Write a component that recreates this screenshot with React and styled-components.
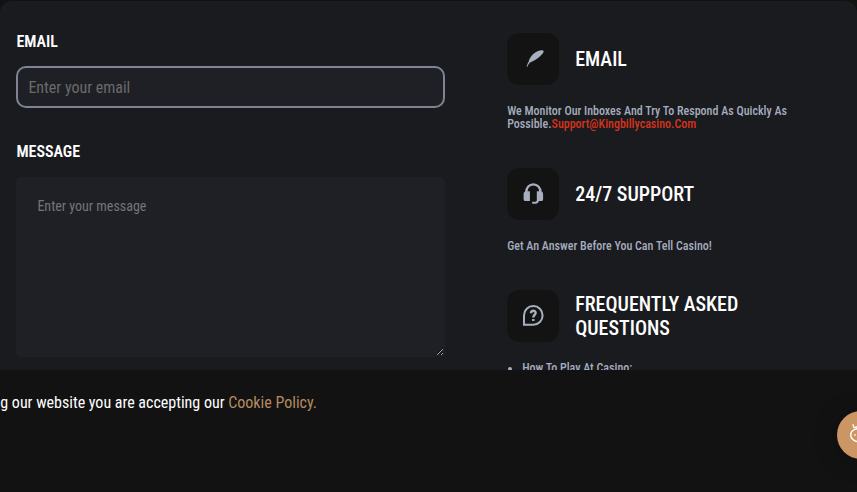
import React from "react";
import styled, { createGlobalStyle } from "styled-components";

const Global = createGlobalStyle`
  *, *::before, *::after { box-sizing: border-box; }
  html, body { margin: 0; height: 100%; overflow: hidden; background: #121213; }
  body {
    font-family: "Roboto Condensed", Roboto, sans-serif;
    font-stretch: 75%;
    color: #fff;
  }
  input, textarea, button { font-family: inherit; font-stretch: inherit; }
`;

const Page = styled.main`
  height: 492px;
  padding-top: 1px;
  overflow: hidden;
`;

const Panel = styled.section`
  display: grid;
  grid-template-columns: 429px 300px;
  column-gap: 62px;
  height: 520px;
  padding: 32px 16px 0;
  border-radius: 12px;
  background: #1a1b1f;
`;

const Form = styled.form`
  display: flex;
  flex-direction: column;
  padding-top: 1px;
`;

const Label = styled.label`
  height: 16px;
  margin-bottom: 16px;
  padding-left: 0.4px;
  font-size: 16px;
  line-height: 16px;
  font-weight: 600;
  text-transform: uppercase;
`;

const Input = styled.input`
  width: 429px;
  height: 42px;
  margin-bottom: 36px;
  padding: 0 10.4px;
  border: 2px solid #7e8494;
  border-radius: 10px;
  outline: none;
  background: #1f2025;
  color: #fff;
  font-size: 16px;
  &::placeholder { color: #6a6a6c; opacity: 1; }
`;

const Message = styled.textarea`
  width: 429px;
  height: 180px;
  padding: 20px 21.4px;
  margin-top: 1px;
  border: 0 solid transparent;
  border-width: 0 1px 1px 0;
  border-radius: 5px;
  outline: none;
  background: #1f2025;
  color: #fff;
  font-size: 14px;
  line-height: 18px;
  &::placeholder { color: #757575; opacity: 1; }
`;

const Contacts = styled.aside`
  display: flex;
  flex-direction: column;
`;

const Contact = styled.article`
  margin-bottom: ${(p) => p.$gap || 0}px;
`;

const Heading = styled.header`
  display: flex;
  align-items: center;
  gap: 16.2px;
  height: 52px;
  margin-bottom: 20px;
`;

const IconBox = styled.div`
  display: flex;
  align-items: center;
  justify-content: center;
  flex: none;
  width: 52px;
  height: 52px;
  border-radius: 12px;
  background: #131313;
  color: #a8afbf;
`;

const Title = styled.h3`
  width: 190px;
  margin: 0;
  font-size: 20px;
  line-height: 24px;
  font-weight: 550;
  text-transform: uppercase;
`;

const Note = styled.p`
  margin: 0;
  padding-left: 0.2px;
  color: #a5adbe;
  font-size: 12px;
  line-height: 13px;
  font-weight: 500;
`;

const MailLink = styled.a`
  color: #d6331b;
`;

const Topics = styled.ul`
  margin: 0;
  padding-left: 15.2px;
  color: #a5adbe;
  font-size: 12px;
  line-height: 13px;
  font-weight: 500;
`;

const CookieBar = styled.footer`
  position: fixed;
  inset: auto 0 0 0;
  height: 122px;
  padding-top: 23px;
  background: #121213;
`;

const CookieText = styled.p`
  display: flex;
  justify-content: flex-end;
  width: 317px;
  margin: 0;
  font-size: 16px;
  line-height: 20px;
  white-space: pre;
`;

const PolicyLink = styled.a`
  color: #b58a5f;
`;

const ChatButton = styled.button`
  position: fixed;
  top: 411px;
  left: 837px;
  width: 48px;
  height: 48px;
  padding: 0;
  border: 0;
  border-radius: 50%;
  background: #cb9663;
  color: #fff;
  box-shadow: 0 2px 24px rgba(0, 0, 0, 0.25);
  svg { display: block; margin: 12px; }
`;

const Feather = () => (
  <svg width="24" height="24" viewBox="0 0 24 24" fill="currentColor">
    <path d="M5.600 20C6.100 18 6.700 16.300 7.700 14.600C8.200 11.500 10.300 8.500 13.200 6.200C16 4.100 19.500 2.900 22 3.400C23.200 4 22.500 5.500 21.200 7C18.600 10.200 15.300 12.800 11.200 14.600L9 15.400C7.800 16.600 6.900 18.200 6.200 20Z" />
  </svg>
);

const Headset = () => (
  <svg width="24" height="24" viewBox="0 0 24 24" fill="currentColor">
    <path d="M5.300 11V10C5.300 5.500 8.200 2.300 12.300 2.300S19.500 5.500 19.500 10V11" fill="none" stroke="currentColor" strokeWidth="2.300" />
    <path d="M8.900 9.200V19H4.400C3.300 19 2.600 18.300 2.600 17.200V12C2.600 10.300 3.600 9.400 5.300 9.200Z" />
    <path d="M15.800 9.200V19H20.300C21.400 19 22.100 18.300 22.100 17.200V12C22.100 10.300 21.100 9.400 19.400 9.200Z" />
    <path d="M17 18C17 20 16.200 20.700 14.300 20.700H11.200" fill="none" stroke="currentColor" strokeWidth="2" />
  </svg>
);

const Question = () => (
  <svg width="24" height="24" viewBox="0 0 24 24" fill="none" stroke="currentColor" strokeWidth="2">
    <path d="M3 20.700V11.400A9.300 9.300 0 1 1 12.300 20.700Z" />
    <path d="M10 9.200C10.100 6 14.800 6 14.600 9C14.500 10.900 12.300 10.900 12.300 13.500M12.300 14.900V17.100" strokeWidth="2.500" />
  </svg>
);

const Mascot = () => (
  <svg width="24" height="24" viewBox="0 0 24 24" fill="none" stroke="currentColor" strokeWidth="1.4">
    <path d="M5.500 5.600L3.800 1.300M6 4.500L8.500 3.700" />
    <path d="M12 5.300C6 5.200 1.800 7.800 1.700 11.800C1.700 15.500 4.800 18.200 10 19" />
    <circle cx="6" cy="12" r=".5" strokeWidth="1" />
  </svg>
);

export default function App() {
  return (
    <>
      <Global />
      <Page>
        <Panel>
          <Form>
            <Label htmlFor="email">Email</Label>
            <Input id="email" type="email" placeholder="Enter your email" />
            <Label htmlFor="message">Message</Label>
            <Message id="message" placeholder="Enter your message" />
          </Form>
          <Contacts>
            <Contact $gap={37}>
              <Heading>
                <IconBox><Feather /></IconBox>
                <Title>Email</Title>
              </Heading>
              <Note>
                We Monitor Our Inboxes And Try To Respond As Quickly As
                Possible.<MailLink>Support@Kingbillycasino.Com</MailLink>
              </Note>
            </Contact>
            <Contact $gap={37}>
              <Heading>
                <IconBox><Headset /></IconBox>
                <Title>24/7 Support</Title>
              </Heading>
              <Note>Get An Answer Before You Can Tell Casino!</Note>
            </Contact>
            <Contact>
              <Heading>
                <IconBox><Question /></IconBox>
                <Title>Frequently Asked Questions</Title>
              </Heading>
              <Topics>
                <li>How To Play At Casino:</li>
              </Topics>
            </Contact>
          </Contacts>
        </Panel>
      </Page>
      <CookieBar>
        <CookieText>
          g our website you are accepting our <PolicyLink>Cookie Policy.</PolicyLink>
        </CookieText>
      </CookieBar>
      <ChatButton aria-label="Chat"><Mascot /></ChatButton>
    </>
  );
}
